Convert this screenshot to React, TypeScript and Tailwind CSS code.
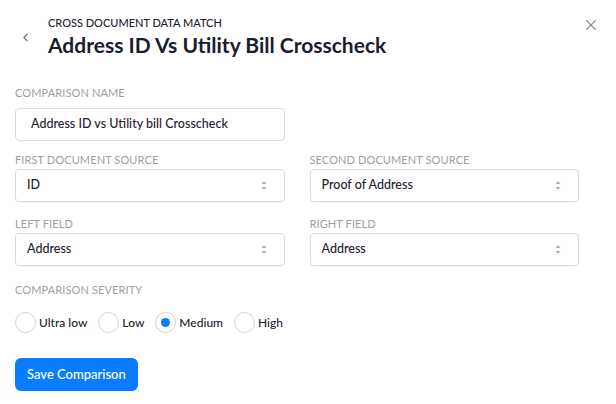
import { ChevronLeft, X } from "lucide-react"

function Label({ children }: { children: React.ReactNode }) {
  return <div className="text-[11px] leading-[14px] uppercase text-[#9ea0a8] tracking-[0.01em]">{children}</div>
}

function Carets() {
  return (
    <svg width="6" height="11" viewBox="0 0 6 11" className="text-[#aeb1b8]">
      <path d="M0.5 4 L3 1 L5.5 4 Z" fill="currentColor" />
      <path d="M0.5 7 L3 10 L5.5 7 Z" fill="currentColor" />
    </svg>
  )
}

function Select({ value }: { value: string }) {
  return (
    <div className="flex items-center justify-between h-[33px] rounded-[4px] border border-[#d9d9e6] bg-white pl-[11px] pr-[17px] shadow-[0_1px_1px_rgba(0,0,0,0.04)]">
      <span className="text-[12.5px] text-[#1f2230] font-medium">{value}</span>
      <Carets />
    </div>
  )
}

function Radio({ label, checked }: { label: string; checked?: boolean }) {
  return (
    <div className="flex items-center gap-[3px]">
      <div className="w-[21px] h-[21px] rounded-full border border-[#cfd1d8] bg-white flex items-center justify-center">
        {checked && <div className="w-[9px] h-[9px] rounded-full bg-[#0a7cff]" />}
      </div>
      <span className="text-[12px] leading-[16px] text-[#1f2230] font-medium">{label}</span>
    </div>
  )
}

export default function App() {
  return (
    <div className="w-[616px] h-[404px] bg-white text-[#1a1d2e]" style={{ fontFamily: "Lato, 'Noto Sans', sans-serif" }}>
      <div className="flex items-start justify-between pt-[15px] pr-[16px] pl-[19px]">
        <div className="flex items-start gap-[16px]">
          <ChevronLeft size={13} strokeWidth={2} className="text-[#6b6f7b] mt-[16px]" />
          <div>
            <div className="text-[11px] leading-[16px] font-medium text-[#1f2230]">CROSS DOCUMENT DATA MATCH</div>
            <div className="text-[21px] leading-[26px] font-bold text-[#1a1d2e] mt-[1px]">Address ID Vs Utility Bill Crosscheck</div>
          </div>
        </div>
        <X size={18} strokeWidth={1.5} className="text-[#8a8d96] mt-[1px]" />
      </div>

      <div className="px-[15px] pt-[28px]">
        <Label>Comparison Name</Label>
        <div className="mt-[8px] w-[270px] h-[33px] rounded-[4px] border border-[#d9d9e6] flex items-center pl-[15px] text-[12.5px] font-medium text-[#1f2230]">
          Address ID vs Utility bill Crosscheck
        </div>

        <div className="grid grid-cols-2 gap-x-[25px] w-[564px] mt-[12px] gap-y-[15px]">
          <div className="flex flex-col gap-[2px]">
            <Label>First Document Source</Label>
            <Select value="ID" />
          </div>
          <div className="flex flex-col gap-[2px]">
            <Label>Second Document Source</Label>
            <Select value="Proof of Address" />
          </div>
          <div className="flex flex-col gap-[2px]">
            <Label>Left Field</Label>
            <Select value="Address" />
          </div>
          <div className="flex flex-col gap-[2px]">
            <Label>Right Field</Label>
            <Select value="Address" />
          </div>
        </div>

        <div className="mt-[17px]">
          <Label>Comparison Severity</Label>
        </div>
        <div className="flex items-center gap-[11px] mt-[15px]">
          <Radio label="Ultra low" />
          <Radio label="Low" />
          <Radio label="Medium" checked />
          <Radio label="High" />
        </div>

        <button className="mt-[25px] h-[33px] px-[12px] rounded-[6px] bg-[#0a7cff] text-white text-[13px] font-medium">
          Save Comparison
        </button>
      </div>
    </div>
  )
}
